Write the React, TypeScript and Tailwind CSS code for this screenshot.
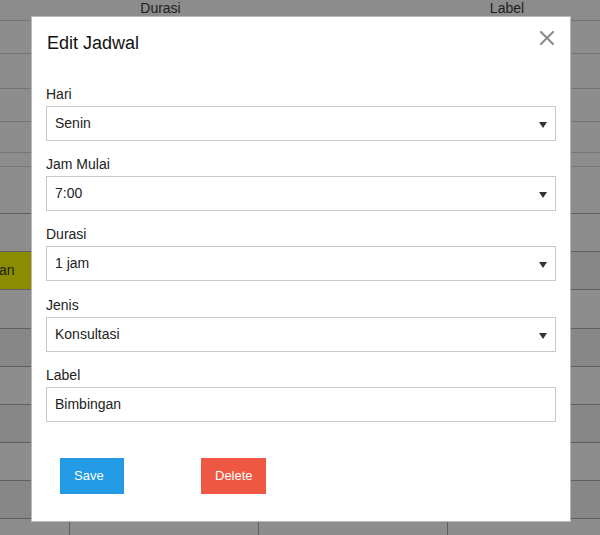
import React from "react";

const rows: { h: number; dark: boolean; line: string }[] = [
  { h: 33, dark: false, line: "#737373" },
  { h: 35, dark: false, line: "#737373" },
  { h: 33, dark: false, line: "#737373" },
  { h: 31, dark: false, line: "#767676" },
  { h: 14, dark: false, line: "#767676" },
  { h: 47, dark: false, line: "#5f5f5f" },
  { h: 38, dark: false, line: "#5f5f5f" },
  { h: 38, dark: true, line: "#5f5f5f" },
  { h: 39, dark: false, line: "#5f5f5f" },
  { h: 38, dark: true, line: "#5f5f5f" },
  { h: 38, dark: false, line: "#5f5f5f" },
  { h: 38, dark: true, line: "#5f5f5f" },
  { h: 38, dark: false, line: "#5f5f5f" },
  { h: 38, dark: true, line: "#5f5f5f" },
  { h: 30, dark: false, line: "#5f5f5f" },
];

function Caret() {
  return (
    <svg width="8" height="6" viewBox="0 0 8 6" className="absolute right-[8px] top-[15px]">
      <path d="M0 0 H8 L4 6 Z" fill="#333" />
    </svg>
  );
}

function SelectField({ label, value, extra }: { label: string; value: string; extra?: boolean }) {
  return (
    <div className="flex flex-col">
      <div className="h-[16px] leading-[16px] text-[14px] text-[#222]">{label}</div>
      <div className="relative mt-[4px] h-[35px] border border-[#c8c8c8] bg-white pl-[8px] text-[14px] leading-[33px] text-[#222]">
        {value}
        <Caret />
      </div>
      <div className={extra ? "h-[16px]" : "h-[15px]"} />
    </div>
  );
}

export default function App() {
  return (
    <div
      className="relative h-[535px] w-[600px] overflow-hidden bg-[#8c8c8c]"
      style={{ fontFamily: '"Liberation Sans", Arial, sans-serif' }}
    >
      {/* background table */}
      <div className="flex flex-col">
        <div className="flex h-[21px] border-b border-[#737373] text-[14px] leading-[17px] text-[#1e1e1e]">
          <div className="w-[70px]" />
          <div className="w-[189px] pr-[8px] text-center">Durasi</div>
          <div className="w-[189px]" />
          <div className="w-[118px] text-center">Label</div>
        </div>
        {rows.map((r, i) => (
          <div
            key={i}
            className="flex border-b"
            style={{ height: r.h, borderColor: r.line, backgroundColor: r.dark ? "#878787" : "#8d8d8d" }}
          >
            <div
              className={`w-[70px] border-r border-[#5f5f5f] ${i === 7 ? "bg-[#8c8c00]" : ""}`}
            >
              {i === 7 && (
                <div className="ml-[-1px] text-[14px] leading-[37px] text-[#1e1e1e]">an</div>
              )}
            </div>
            <div className="w-[189px] border-r border-[#5f5f5f]" />
            <div className="w-[189px] border-r border-[#5f5f5f]" />
            <div className="flex-1" />
          </div>
        ))}
      </div>

      {/* modal */}
      <div className="absolute left-[31px] top-[16px] flex h-[506px] w-[540px] flex-col border border-[#b9b9b9] bg-white px-[14px]">
        <div className="relative mt-[16px] flex h-[20px] items-center">
          <div className="pl-[1px] text-[18px] leading-[20px] text-[#111]">Edit Jadwal</div>
          <svg
            width="14"
            height="14"
            viewBox="0 0 14 14"
            className="absolute right-[2px] top-[-2px]"
          >
            <path d="M1 1 L13 13 M13 1 L1 13" stroke="#8a8a8a" strokeWidth="2" strokeLinecap="square" />
          </svg>
        </div>
        <div className="mt-[33px] flex flex-col">
          <SelectField label="Hari" value="Senin" />
          <SelectField label="Jam Mulai" value="7:00" />
          <SelectField label="Durasi" value="1 jam" extra />
          <SelectField label="Jenis" value="Konsultasi" />
          <div className="flex flex-col">
            <div className="h-[16px] text-[14px] leading-[16px] text-[#222]">Label</div>
            <div className="mt-[4px] h-[35px] border border-[#c8c8c8] bg-white pl-[8px] text-[14px] leading-[33px] text-[#222]">
              Bimbingan
            </div>
          </div>
        </div>
        <div className="ml-[14px] mt-[36px] flex gap-[77px]">
          <div className="flex h-[36px] w-[64px] items-center bg-[#239be6] pl-[14px] text-[13px] text-white">
            Save
          </div>
          <div className="flex h-[36px] w-[65px] items-center bg-[#ee5843] pl-[14px] text-[13px] text-white">
            Delete
          </div>
        </div>
      </div>
    </div>
  );
}
